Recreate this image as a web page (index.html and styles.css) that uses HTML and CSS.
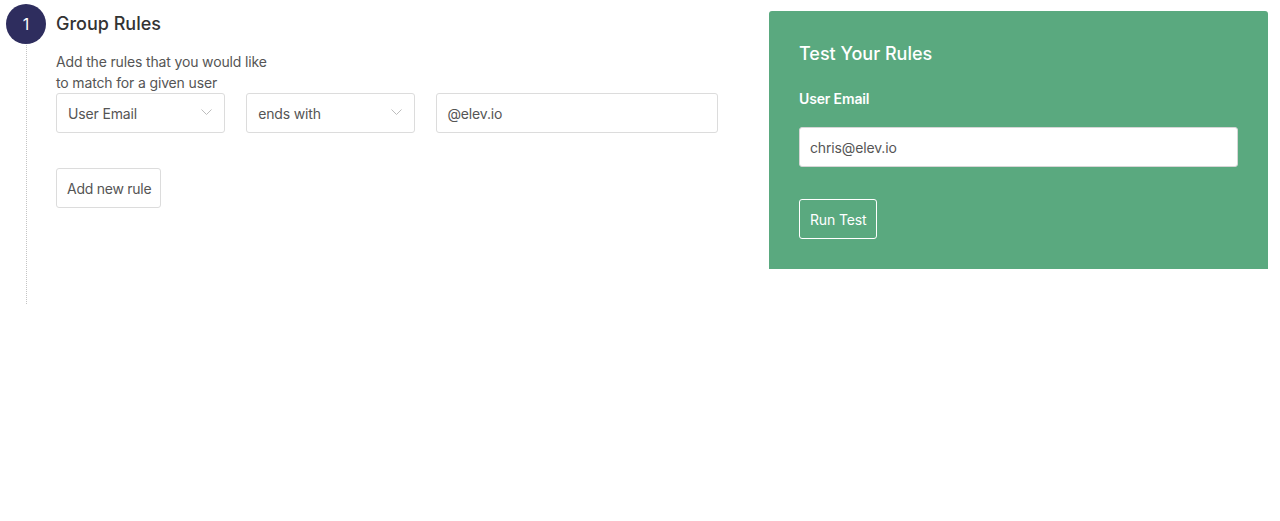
FILE: index.html
```html
<!DOCTYPE html>
<html>
<head>
<meta charset="utf-8">
<link rel="stylesheet" href="styles.css">
</head>
<body>
<div class="page">
  <div class="rules">
    <div class="step">
      <div class="step-num">1</div>
      <div class="step-line"></div>
    </div>
    <div class="content">
      <h2 class="title">Group Rules</h2>
      <p class="desc">Add the rules that you would like<br>to match for a given user</p>
      <div class="rule-row">
        <div class="select"><span>User Email</span><svg class="chev" width="11" height="6" viewBox="0 0 11 6"><path d="M0.5 0.5 L5.5 5.5 L10.5 0.5" fill="none" stroke="#bdbdbd" stroke-width="1"/></svg></div>
        <div class="select"><span>ends with</span><svg class="chev" width="11" height="6" viewBox="0 0 11 6"><path d="M0.5 0.5 L5.5 5.5 L10.5 0.5" fill="none" stroke="#bdbdbd" stroke-width="1"/></svg></div>
        <div class="input">@elev.io</div>
      </div>
      <button class="btn">Add new rule</button>
    </div>
  </div>
  <div class="panel">
    <h2 class="panel-title">Test Your Rules</h2>
    <div class="panel-label">User Email</div>
    <div class="panel-input">chris@elev.io</div>
    <button class="btn-ghost">Run Test</button>
  </div>
</div>
</body>
</html>
```
FILE: styles.css
```css
* { box-sizing: border-box; }
body {
  margin: 0;
  background: #fff;
  font-family: Inter, "Noto Sans", "Liberation Sans", sans-serif;
  font-size: 14px;
  letter-spacing: -0.15px;
  color: #555;
}
.page {
  display: flex;
  align-items: flex-start;
  padding: 0 12px 0 6px;
}
.rules {
  display: flex;
  gap: 10px;
  padding-top: 4px;
  width: 712px;
}
.step {
  width: 40px;
  flex: none;
}
.step-num {
  width: 40px;
  height: 40px;
  border-radius: 50%;
  background: #2e2d5e;
  color: #fff;
  display: flex;
  align-items: center;
  justify-content: center;
  font-size: 16px;
  font-weight: 400;
  letter-spacing: 0;
}
.step-line {
  margin-left: 20px;
  height: 259px;
  border-left: 1px dotted #c4c4c4;
  margin-top: 1px;
}
.content {
  width: 662px;
}
.title {
  margin: 8px 0 0;
  font-size: 18px;
  line-height: 24px;
  font-weight: 500;
  letter-spacing: 0;
  color: #333;
}
.desc {
  margin: 15px 0 0;
  line-height: 21px;
  color: #555;
}
.rule-row {
  display: flex;
  gap: 21px;
}
.select, .input {
  height: 40px;
  border: 1px solid #dcdcdc;
  border-radius: 3px;
  display: flex;
  align-items: center;
  color: #555;
  background: #fff;
}
.select {
  width: 170px;
  padding: 0 11px 0 11px;
  justify-content: space-between;
}
.chev { margin-right: 1px; margin-top: -2px; }
.input {
  width: 283px;
  padding-left: 10px;
}
.btn {
  margin-top: 35px;
  height: 40px;
  padding: 0 9px 0 10px;
  border: 1px solid #dcdcdc;
  border-radius: 3px;
  background: #fff;
  font: inherit;
  letter-spacing: -0.25px;
  color: #555;
}
.panel {
  margin-left: 51px;
  margin-top: 11px;
  width: 500px;
  background: #5aa97f;
  border-radius: 3px 3px 0 0;
  padding: 31px 30px 30px;
  color: #fff;
}
.panel-title {
  margin: 0;
  font-size: 18px;
  line-height: 24px;
  font-weight: 500;
  letter-spacing: 0;
}
.panel-label {
  margin-top: 23px;
  font-weight: 600;
  line-height: 20px;
}
.panel-input {
  margin-top: 18px;
  height: 40px;
  background: #fff;
  border: 1px solid #d6d6d6;
  border-radius: 3px;
  color: #555;
  display: flex;
  align-items: center;
  padding-left: 10px;
}
.btn-ghost {
  margin-top: 32px;
  height: 40px;
  padding: 0 10px;
  background: transparent;
  border: 1px solid #fff;
  border-radius: 3px;
  color: #fff;
  font: inherit;
  letter-spacing: inherit;
}
```
